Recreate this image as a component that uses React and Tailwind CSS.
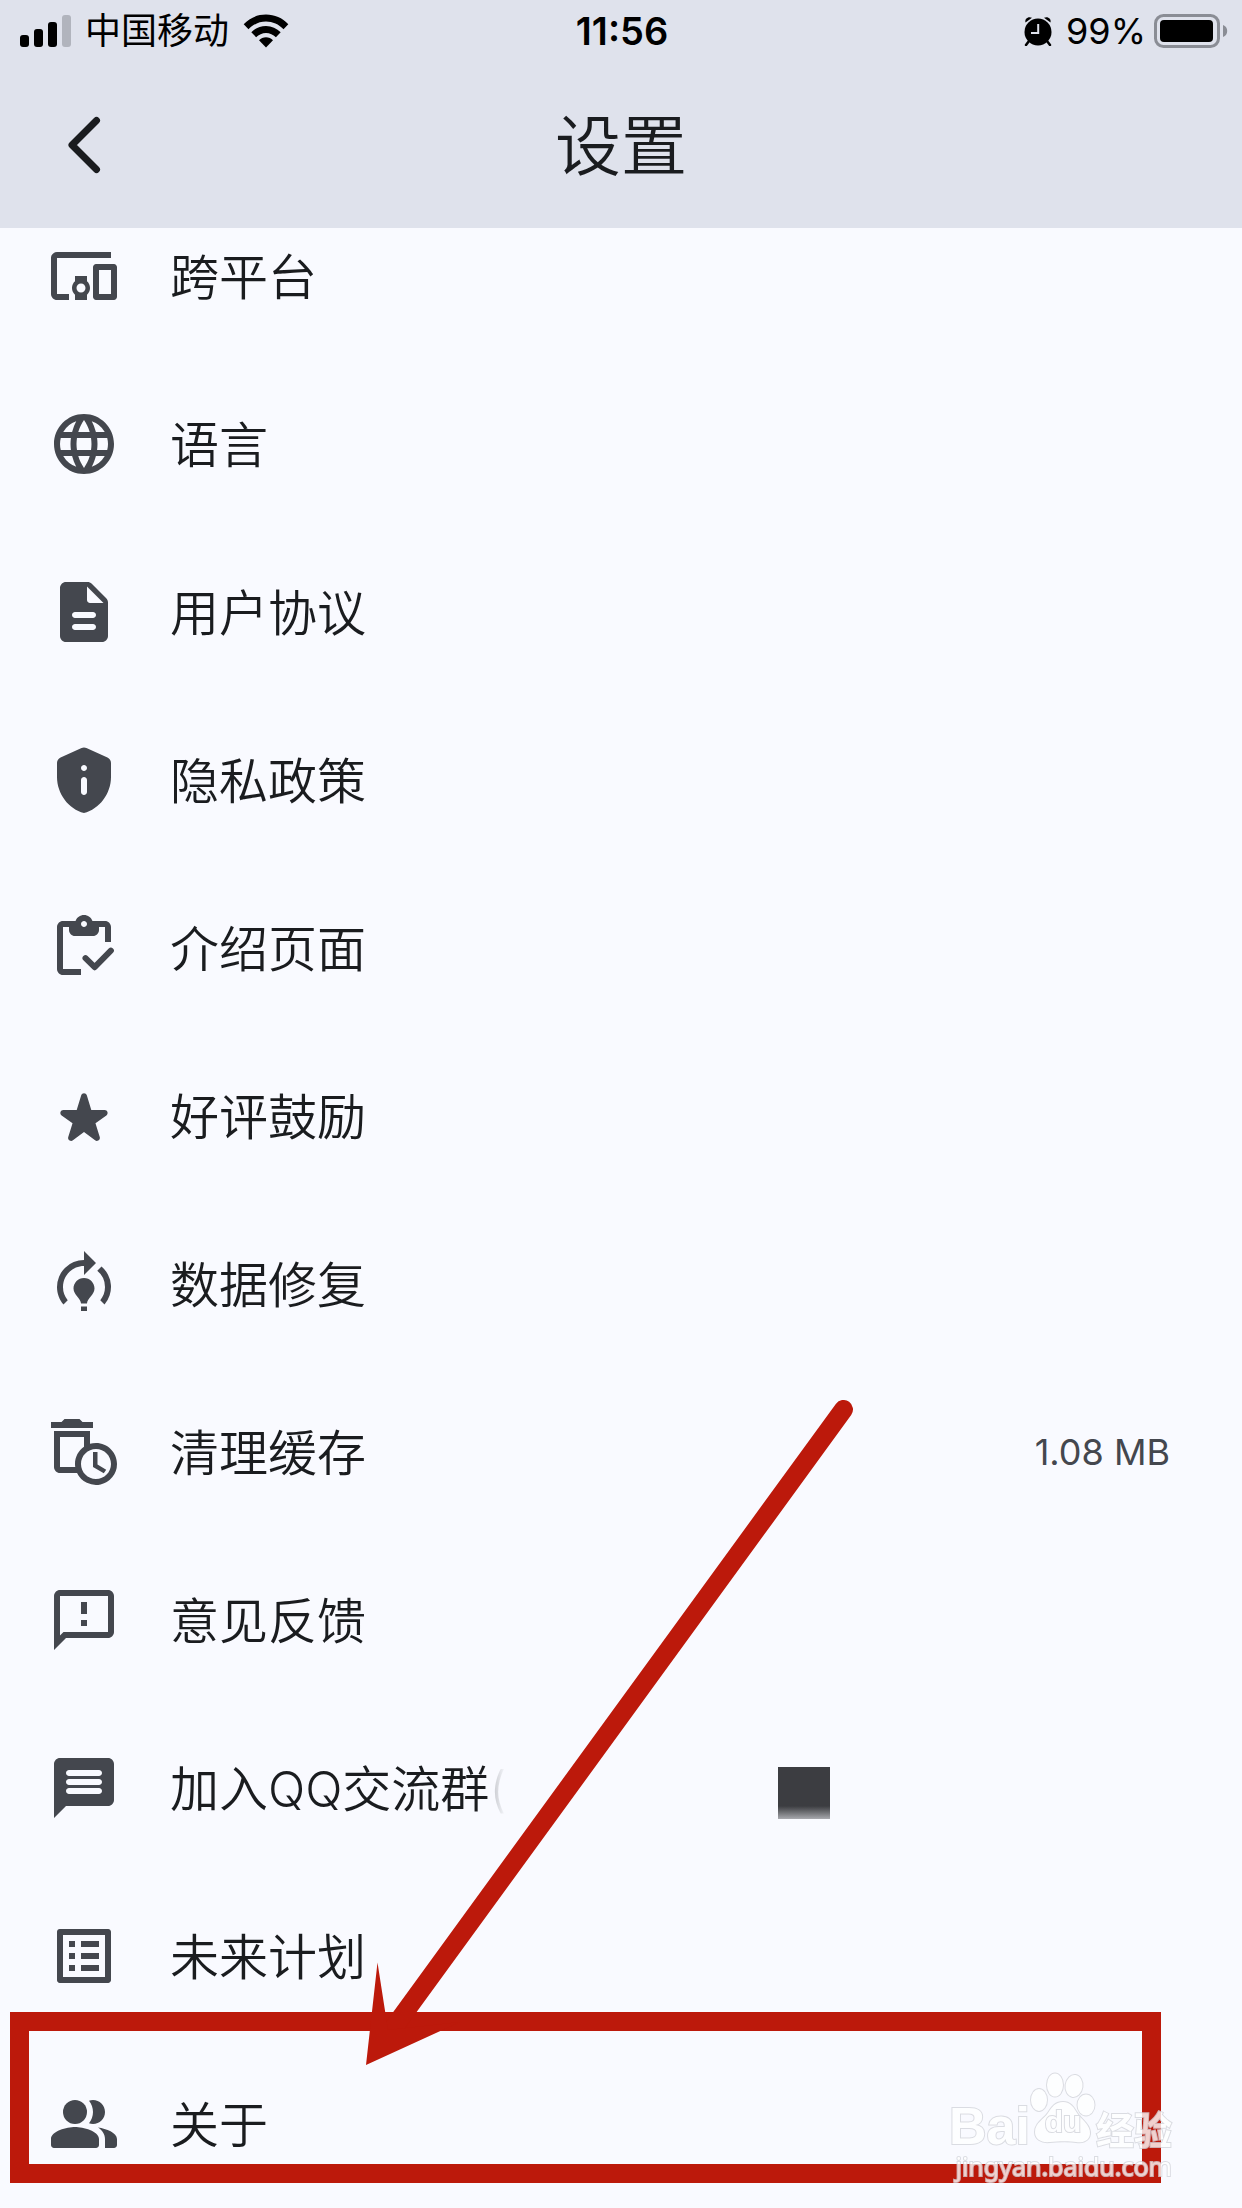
import {
  MdDevicesOther,
  MdLanguage,
  MdListAlt,
  MdModelTraining,
  MdOutlineAutoDelete,
  MdOutlineFeedback,
} from 'react-icons/md'

// Settings screen: status bar, app bar and a list scrolled to its end.
// The rounded icons that the icon set lacks are drawn below.

function RoundIcon({ children }) {
  return (
    <svg viewBox="0 0 24 24" fill="currentColor" className="size-full" aria-hidden="true">
      {children}
    </svg>
  )
}

function DocumentIcon() {
  return (
    <RoundIcon>
      <path d="M14.59 2.59c-.38-.38-.89-.59-1.42-.59H6c-1.1 0-2 .9-2 2v16c0 1.1.89 2 1.99 2H18c1.1 0 2-.9 2-2V8.83c0-.53-.21-1.04-.59-1.41l-4.82-4.83zM15 18H9c-.55 0-1-.45-1-1s.45-1 1-1h6c.55 0 1 .45 1 1s-.45 1-1 1zm0-4H9c-.55 0-1-.45-1-1s.45-1 1-1h6c.55 0 1 .45 1 1s-.45 1-1 1zm-2-6V3.5L18.5 9H14c-.55 0-1-.45-1-1z" />
    </RoundIcon>
  )
}

function PrivacyIcon() {
  return (
    <RoundIcon>
      <path fillRule="evenodd" d="M4.19 4.47C3.47 4.79 3 5.51 3 6.3V11c0 5.55 3.84 10.74 9 12 5.16-1.26 9-6.45 9-12V6.3c0-.79-.47-1.51-1.19-1.83l-7-3.11c-.52-.23-1.11-.23-1.62 0l-7 3.11zM12 7c.55 0 1 .45 1 1s-.45 1-1 1-1-.45-1-1 .45-1 1-1zm0 4c.55 0 1 .45 1 1v4c0 .55-.45 1-1 1s-1-.45-1-1v-4c0-.55.45-1 1-1z" />
    </RoundIcon>
  )
}

function ClipboardIcon() {
  return (
    <RoundIcon>
      <path fillRule="evenodd" d="M5 5h2v1c0 1.1.9 2 2 2h6c1.1 0 2-.9 2-2V5h2v5h2V5c0-1.1-.9-2-2-2h-4.18C14.4 1.84 13.3 1 12 1s-2.4.84-2.82 2H5c-1.1 0-2 .9-2 2v14c0 1.1.9 2 2 2h6v-2H5V5zm7-2c.55 0 1 .45 1 1s-.45 1-1 1-1-.45-1-1 .45-1 1-1z" />
      <path d="M12.5 15.4l3.05 3 5.4-5.5" fill="none" stroke="currentColor" strokeWidth="2" strokeLinecap="round" strokeLinejoin="round" />
    </RoundIcon>
  )
}

function StarIcon() {
  return (
    <RoundIcon>
      <path d="M14.43 10l-1.47-4.84c-.29-.95-1.63-.95-1.91 0L9.57 10H5.12c-.97 0-1.37 1.25-.58 1.81l3.64 2.6-1.43 4.61c-.29.93.79 1.68 1.56 1.09L12 17.31l3.69 2.81c.77.59 1.85-.16 1.56-1.09l-1.43-4.61 3.64-2.6c.79-.57.39-1.81-.58-1.81h-4.45z" />
    </RoundIcon>
  )
}

function ChatIcon() {
  return (
    <RoundIcon>
      <path d="M20 2H4c-1.1 0-2 .9-2 2v18l4-4h14c1.1 0 2-.9 2-2V4c0-1.1-.9-2-2-2zm-3 12H7c-.55 0-1-.45-1-1s.45-1 1-1h10c.55 0 1 .45 1 1s-.45 1-1 1zm0-3H7c-.55 0-1-.45-1-1s.45-1 1-1h10c.55 0 1 .45 1 1s-.45 1-1 1zm0-3H7c-.55 0-1-.45-1-1s.45-1 1-1h10c.55 0 1 .45 1 1s-.45 1-1 1z" />
    </RoundIcon>
  )
}

function PeopleIcon() {
  return (
    <RoundIcon>
      <circle cx="9" cy="8" r="4" />
      <path d="M15 12c2.21 0 4-1.79 4-4s-1.79-4-4-4c-.47 0-.91.1-1.33.24C14.5 5.27 15 6.58 15 8s-.5 2.73-1.33 3.76c.42.14.86.24 1.33.24z" />
      <path d="M9 13c-2.67 0-8 1.34-8 4v2c0 .55.45 1 1 1h14c.55 0 1-.45 1-1v-2c0-2.66-5.33-4-8-4zM16.67 13.13C18.04 14.06 19 15.32 19 17v3h3c.55 0 1-.45 1-1v-2c0-2.18-3.57-3.47-6.33-3.87z" />
    </RoundIcon>
  )
}

const ITEMS = [
  { icon: MdDevicesOther, label: '跨平台' },
  { icon: MdLanguage, label: '语言' },
  { icon: DocumentIcon, label: '用户协议' },
  { icon: PrivacyIcon, label: '隐私政策' },
  { icon: ClipboardIcon, label: '介绍页面' },
  { icon: StarIcon, label: '好评鼓励' },
  { icon: MdModelTraining, label: '数据修复' },
  { icon: MdOutlineAutoDelete, label: '清理缓存', value: '1.08 MB' },
  { icon: MdOutlineFeedback, label: '意见反馈' },
  { icon: ChatIcon, label: '加入QQ交流群', masked: true },
  { icon: MdListAlt, label: '未来计划' },
  { icon: PeopleIcon, label: '关于', highlighted: true },
]

function StatusBar() {
  return (
    <div className="grid h-[62px] grid-cols-[1fr_auto_1fr] items-center pr-3.5 pl-4 text-4xl text-black">
      <div className="flex items-center gap-3.5 pl-1">
        <svg viewBox="0 0 51 32" className="h-8 w-[51px]" aria-label="信号">
          <rect x="0" y="20" width="9" height="12" rx="3" />
          <rect x="14" y="14" width="9" height="18" rx="3" />
          <rect x="28" y="7" width="9" height="25" rx="3" />
          <rect x="42" y="0" width="9" height="32" rx="3" fill="#b1b4bd" />
        </svg>
        <span>中国移动</span>
        <svg viewBox="0 0 46 34" className="h-[34px] w-[46px]" aria-label="Wi-Fi">
          <path d="M0.7 10.2C6.6 4 14.4 .6 23 .6s16.400 3.400 22.300 9.600l-4.800 5C35.800 10.400 29.700 7.600 23 7.600S10.200 10.400 5.500 15.200z" />
          <path d="M8.300 18.200C12.200 14.200 17.300 11.900 23 11.900s10.800 2.300 14.700 6.300l-4.800 5C30.200 20.500 26.800 18.900 23 18.900s-7.200 1.600-9.900 4.300z" />
          <path d="M16 26.200c1.900-1.900 4.300-3 7-3s5.100 1.100 7 3L23 33.500z" />
        </svg>
      </div>
      <time className="text-[38px] font-semibold">11:56</time>
      <div className="flex items-center justify-end">
        <svg viewBox="0 0 28 30" className="mr-3.5 h-[30px] w-7" aria-label="闹钟">
          <circle cx="14" cy="16" r="13.500" />
          <path d="M1.500 6.500C.5 3 4 0 8 1.800zM26.500 6.500C27.500 3 24 0 20 1.800z" />
          <path d="M5 25l-3 4M23 25l3 4" stroke="#000" strokeWidth="2.500" strokeLinecap="round" />
          <path d="M14.200 8v9H7" fill="none" stroke="#dfe2ec" strokeWidth="2" />
        </svg>
        <span className="mr-2">99%</span>
        <svg viewBox="0 0 74 34" className="h-[34px] w-[74px]" aria-label="电池">
          <rect x="1.500" y="1.500" width="63" height="31" rx="8" fill="none" stroke="#8a8d95" strokeWidth="3" />
          <rect x="6" y="6" width="53" height="22" rx="4" />
          <path d="M69 11c2.700 1 4.200 3.300 4.200 6s-1.500 5-4.200 6z" fill="#8a8d95" />
        </svg>
      </div>
    </div>
  )
}

function Watermark() {
  return (
    <div className="pointer-events-none absolute right-[70px] bottom-7 flex flex-col items-end text-white opacity-80 [-webkit-text-stroke:2px_#d3d5db] [paint-order:stroke_fill]">
      <div className="flex items-baseline leading-none font-bold">
        <span className="font-['Liberation_Sans',sans-serif] text-[52px]">Bai</span>
        <span className="relative">
          <svg viewBox="0 0 66 72" className="h-[72px] w-[66px]" fill="#fff" stroke="#d3d5db" strokeWidth="2" aria-hidden="true">
            <ellipse cx="9" cy="28" rx="8" ry="11" />
            <ellipse cx="25" cy="13" rx="8" ry="11.500" />
            <ellipse cx="44" cy="14" rx="8.500" ry="11" transform="rotate(8 44 14)" />
            <ellipse cx="56" cy="33" rx="8.500" ry="10.500" />
            <path d="M33 30c8 0 11 6 14 11s14 12 13 21c-1 8-9 9-14 8s-18-1-26 0C11 71 5 67 5 60c0-9 9-13 13-19s7-11 15-11z" />
          </svg>
          <span className="absolute inset-x-0 bottom-1 text-center font-['Liberation_Sans',sans-serif] text-3xl">du</span>
        </span>
        <span className="text-[38px]">经验</span>
      </div>
      <span className="font-['Noto_Sans',sans-serif] text-[25px] leading-7">jingyan.baidu.com</span>
    </div>
  )
}

// Red frame round the row, with the arrow that points at it
function Highlight() {
  return (
    <div className="pointer-events-none absolute -top-7 right-[81px] bottom-[25px] left-2.5 border-[19px] border-[#bc190b]">
      <svg viewBox="0 0 500 680" className="absolute -top-[631px] left-[331px] h-[680px] w-[500px]" fill="#bc190b" aria-hidden="true">
        <path d="M483.500 9.500L34 627" fill="none" stroke="#bc190b" strokeWidth="19" strokeLinecap="round" />
        <path d="M6 665L17.500 562.500L28 630L100 622z" />
      </svg>
    </div>
  )
}

function SettingsItem({ icon: Icon, label, value, masked, highlighted }) {
  return (
    <li className="relative">
      <button type="button" className="flex h-42 w-full items-center gap-[50px] pr-[72px] pl-12 text-left">
        <span className="size-18 shrink-0 text-[#44474e]">
          <Icon className="size-full" />
        </span>
        <span className="flex items-center pt-0.5 text-[49px] leading-none font-[350]">
          {label}
          {masked && (
            <>
              <span className="bg-linear-to-r from-[#b9bbc0] to-[#f9faff] bg-clip-text text-transparent">(</span>
              <span className="mt-2 ml-[272px] size-[52px] bg-linear-to-b from-[#3c3d41] from-75% to-[#a9aaaf]" />
            </>
          )}
        </span>
        {value && <span className="ml-auto text-4xl text-[#44474e]">{value}</span>}
      </button>
      {highlighted && <Highlight />}
      {highlighted && <Watermark />}
    </li>
  )
}

export default function App() {
  return (
    <div className="min-h-screen overflow-hidden bg-[#f9faff] font-['Inter','Noto_Sans_CJK_SC',sans-serif] text-[#1a1c1f]">
      <header className="relative z-10 bg-[#dfe2ec]">
        <StatusBar />
        <div className="grid h-[166px] grid-cols-[1fr_auto_1fr] items-center px-12">
          <button type="button" aria-label="返回" className="flex size-18 items-center justify-center">
            <svg viewBox="0 0 34 58" className="h-[58px] w-[34px]" fill="none" stroke="currentColor" strokeWidth="7" strokeLinecap="round" strokeLinejoin="round" aria-hidden="true">
              <path d="M29.500 4.500L5 29l24.500 24.500" />
            </svg>
          </button>
          <h1 className="pt-0.5 text-[66px] leading-none font-[350]">设置</h1>
        </div>
      </header>
      <main>
        <ul className="-mt-9">
          {ITEMS.map(item => <SettingsItem key={item.label} {...item} />)}
        </ul>
      </main>
    </div>
  )
}
